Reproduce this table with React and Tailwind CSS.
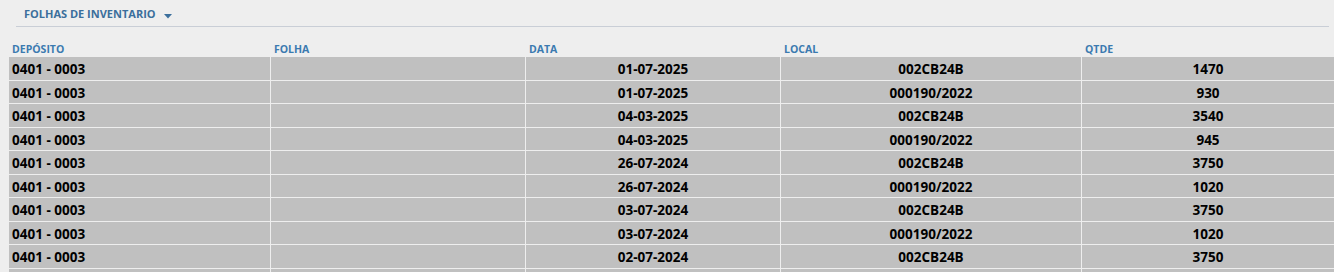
const rows = [
  ['0401 - 0003', '', '01-07-2025', '002CB24B', '1470'],
  ['0401 - 0003', '', '01-07-2025', '000190/2022', '930'],
  ['0401 - 0003', '', '04-03-2025', '002CB24B', '3540'],
  ['0401 - 0003', '', '04-03-2025', '000190/2022', '945'],
  ['0401 - 0003', '', '26-07-2024', '002CB24B', '3750'],
  ['0401 - 0003', '', '26-07-2024', '000190/2022', '1020'],
  ['0401 - 0003', '', '03-07-2024', '002CB24B', '3750'],
  ['0401 - 0003', '', '03-07-2024', '000190/2022', '1020'],
  ['0401 - 0003', '', '02-07-2024', '002CB24B', '3750'],
  ['', '', '', '', ''],
];

const headers = ['DEPÓSITO', 'FOLHA', 'DATA', 'LOCAL', 'QTDE'];
const cols = 'grid grid-cols-[261px_254px_254px_300px_1fr] gap-x-px';

export default function App() {
  return (
    <div className="h-[272px] w-[1334px] overflow-hidden bg-[#eeeeee] font-['Open_Sans',sans-serif]">
      <div className="ml-4 mr-[5px] flex h-[27px] items-center border-b border-[#c9ced6] pl-2 pt-[3px]">
        <span className="text-[11px] font-bold text-[#3b6f9c]">FOLHAS DE INVENTARIO</span>
        <svg width="8" height="5" viewBox="0 0 8 5" className="ml-[8px] mt-[3px]">
          <path d="M0 0h8L4 4.5z" fill="#3b6f9c" />
        </svg>
      </div>

      <div className="pl-[9px] pt-[14px]">
        <div className={`${cols} h-[16px] items-center`}>
          {headers.map((h) => (
            <div key={h} className="pl-[3px] text-[10.5px] font-bold leading-none text-[#3b7ab0]">{h}</div>
          ))}
        </div>
        <div className="flex flex-col gap-y-px">
          {rows.map((r, i) => (
            <div key={i} className={`${cols} h-[22.5px] shrink-0`}>
              {r.map((c, j) => (
                <div
                  key={j}
                  className={`flex items-center bg-[#c0c0c0] pt-[3px] text-[13.5px] font-bold leading-none text-black ${j === 0 ? 'pl-[3px]' : 'justify-center'}`}
                >
                  {c}
                </div>
              ))}
            </div>
          ))}
        </div>
      </div>
    </div>
  );
}
